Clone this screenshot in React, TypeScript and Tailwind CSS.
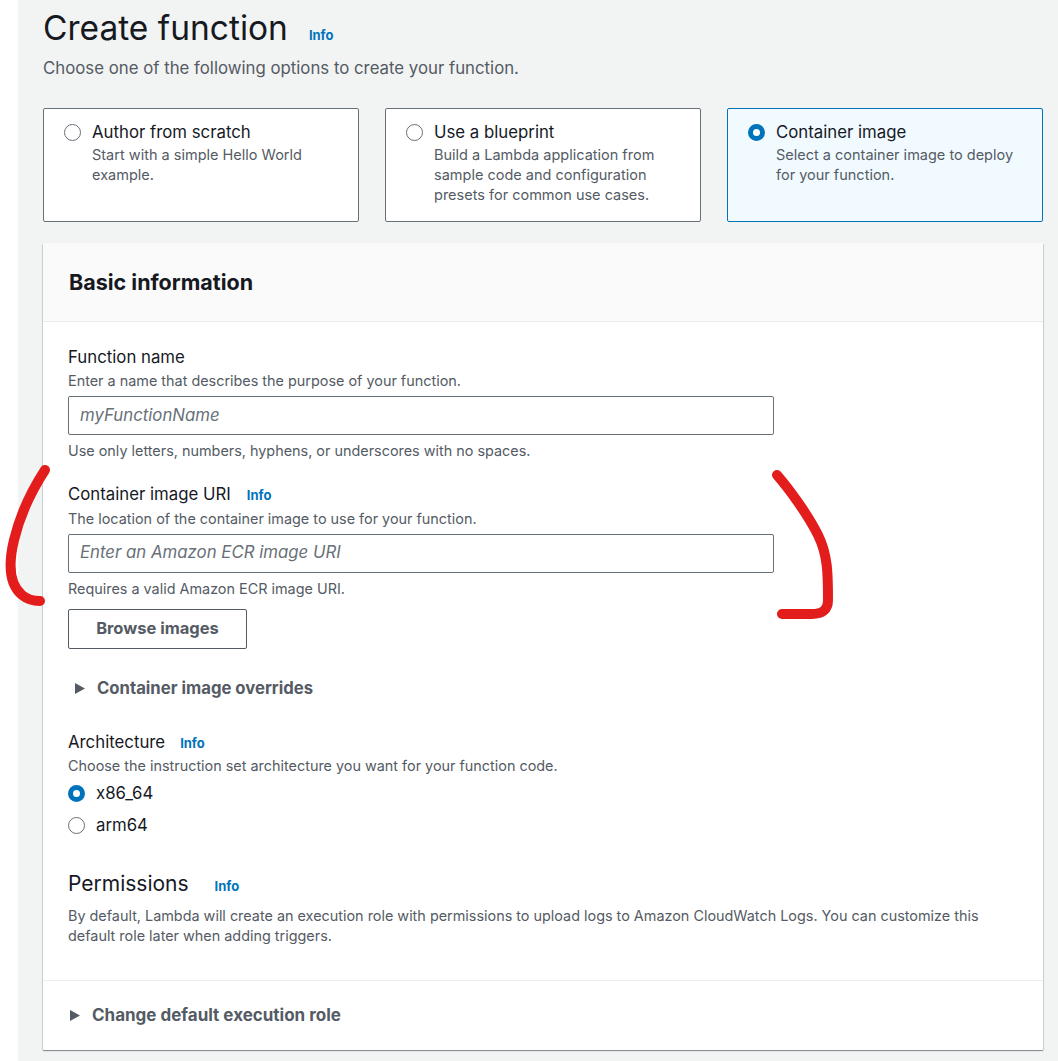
import React from "react";

const font = { fontFamily: "Inter, 'Open Sans', Roboto, Arial, sans-serif" };

const InfoLink = ({ className = "" }: { className?: string }) => (
  <span className={`text-[13px] font-bold text-[#0073bb] ${className}`}>Info</span>
);

const Radio = ({ checked }: { checked?: boolean }) =>
  checked ? (
    <span className="inline-block h-[17px] w-[17px] shrink-0 rounded-full border-[5px] border-[#0073bb] bg-white" />
  ) : (
    <span className="inline-block h-[17px] w-[17px] shrink-0 rounded-full border-[1.5px] border-[#687078] bg-white" />
  );

const Caret = () => (
  <svg width="12" height="13" viewBox="0 0 12 13" className="shrink-0">
    <path d="M1 1 L11 6.5 L1 12 Z" fill="#545b64" />
  </svg>
);

const options = [
  { title: "Author from scratch", desc: "Start with a simple Hello World example.", checked: false },
  { title: "Use a blueprint", desc: "Build a Lambda application from sample code and configuration presets for common use cases.", checked: false },
  { title: "Container image", desc: "Select a container image to deploy for your function.", checked: true },
];

export default function App() {
  return (
    <div style={font} className="relative flex min-h-[1061px] bg-white text-[#16191f]">
      <div className="w-[18px] shrink-0 bg-white" />
      <div className="flex-1 bg-[#f2f3f3] pl-[25px] pr-[15px]">
        <div className="flex items-baseline pt-[6px]">
          <h1 className="text-[33.5px] leading-[44px]">Create function</h1>
          <InfoLink className="ml-[21px]" />
        </div>
        <p className="mt-[6px] text-[16.8px] leading-[24px] text-[#545b64]">
          Choose one of the following options to create your function.
        </p>

        <div className="mt-[28px] grid grid-cols-3 gap-[26px]">
          {options.map(o => (
            <div
              key={o.title}
              className={`h-[114px] rounded-[2px] border pl-[20px] pr-[24px] pt-[12px] ${
                o.checked ? "border-[#0073bb] bg-[#f1faff]" : "border-[#687078] bg-white"
              }`}
            >
              <div className="flex items-center gap-[11px]">
                <Radio checked={o.checked} />
                <span className="text-[16.8px] leading-[22px]">{o.title}</span>
              </div>
              <p className="ml-[28px] mt-[2px] text-[14.5px] leading-[20px] text-[#545b64]">{o.desc}</p>
            </div>
          ))}
        </div>

        <div className="mt-[21px] rounded-[1px] bg-white shadow-[0_1px_1px_0_rgba(0,28,36,0.3),1px_1px_1px_0_rgba(0,28,36,0.15),-1px_1px_1px_0_rgba(0,28,36,0.15)]">
          <div className="flex h-[79px] items-center border-b border-[#eaeded] bg-[#fafafa] px-[26px]">
            <h2 className="text-[21.5px] font-bold">Basic information</h2>
          </div>

          <div className="px-[25px] pt-[24px] pb-[34px]">
            <label className="block text-[16.8px] leading-[22px]">Function name</label>
            <p className="mt-[3px] text-[14.4px] leading-[20px] text-[#545b64]">
              Enter a name that describes the purpose of your function.
            </p>
            <div className="mt-[5px] flex h-[39px] w-[706px] items-center rounded-[2px] border border-[#687078] bg-white px-[11px]">
              <span className="text-[16.8px] italic text-[#687078]">myFunctionName</span>
            </div>
            <p className="mt-[6px] text-[14.4px] leading-[20px] text-[#545b64]">
              Use only letters, numbers, hyphens, or underscores with no spaces.
            </p>

            <div className="mt-[22px] flex items-baseline">
              <label className="text-[16.8px] leading-[22px]">Container image URI</label>
              <InfoLink className="ml-[16px]" />
            </div>
            <p className="mt-[3px] text-[14.4px] leading-[20px] text-[#545b64]">
              The location of the container image to use for your function.
            </p>
            <div className="mt-[5px] flex h-[39px] w-[706px] items-center rounded-[2px] border border-[#687078] bg-white px-[11px]">
              <span className="text-[16.8px] italic text-[#687078]">Enter an Amazon ECR image URI</span>
            </div>
            <p className="mt-[6px] text-[14.4px] leading-[20px] text-[#545b64]">Requires a valid Amazon ECR image URI.</p>

            <button className="mt-[10px] h-[40px] w-[179px] rounded-[2px] border border-[#545b64] bg-white text-[16.5px] font-bold text-[#545b64]">
              Browse images
            </button>

            <div className="mt-[27px] flex items-center gap-[11px] pl-[6px]">
              <Caret />
              <span className="text-[16.7px] font-bold text-[#545b64]">Container image overrides</span>
            </div>

            <div className="mt-[30px] flex items-baseline">
              <label className="text-[16.8px] leading-[22px]">Architecture</label>
              <InfoLink className="ml-[15px]" />
            </div>
            <p className="mt-[3px] text-[14.4px] leading-[20px] text-[#545b64]">
              Choose the instruction set architecture you want for your function code.
            </p>
            <div className="mt-[6px] flex flex-col gap-[10px]">
              <div className="flex items-center gap-[11px]">
                <Radio checked />
                <span className="text-[16.8px] leading-[22px]">x86_64</span>
              </div>
              <div className="flex items-center gap-[11px]">
                <Radio />
                <span className="text-[16.8px] leading-[22px]">arm64</span>
              </div>
            </div>

            <div className="mt-[34px] flex items-baseline">
              <h3 className="text-[21px] leading-[28px]">Permissions</h3>
              <InfoLink className="ml-[26px]" />
            </div>
            <p className="mt-[8px] max-w-[925px] text-[14.4px] leading-[20px] text-[#545b64]">
              By default, Lambda will create an execution role with permissions to upload logs to Amazon CloudWatch Logs. You can
              customize this default role later when adding triggers.
            </p>
          </div>

          <div className="flex h-[70px] items-center gap-[11px] border-t border-[#eaeded] px-[26px]">
            <Caret />
            <span className="text-[17px] font-bold text-[#545b64]">Change default execution role</span>
          </div>
        </div>
      </div>

      {/* hand-drawn red annotation marks */}
      <svg className="pointer-events-none absolute inset-0" width="1058" height="1061" viewBox="0 0 1058 1061">
        <path
          d="M45 470 C 32 490, 20 515, 14 540 C 8 565, 10 585, 22 595 C 28 600, 34 601, 40 601"
          fill="none"
          stroke="#e31c1c"
          strokeWidth="10"
          strokeLinecap="round"
        />
        <path
          d="M777 475 C 790 490, 808 515, 818 535 C 828 555, 828 575, 828 600 C 828 610, 822 614, 812 614 L 782 614"
          fill="none"
          stroke="#e31c1c"
          strokeWidth="10"
          strokeLinecap="round"
          strokeLinejoin="round"
        />
      </svg>
    </div>
  );
}
